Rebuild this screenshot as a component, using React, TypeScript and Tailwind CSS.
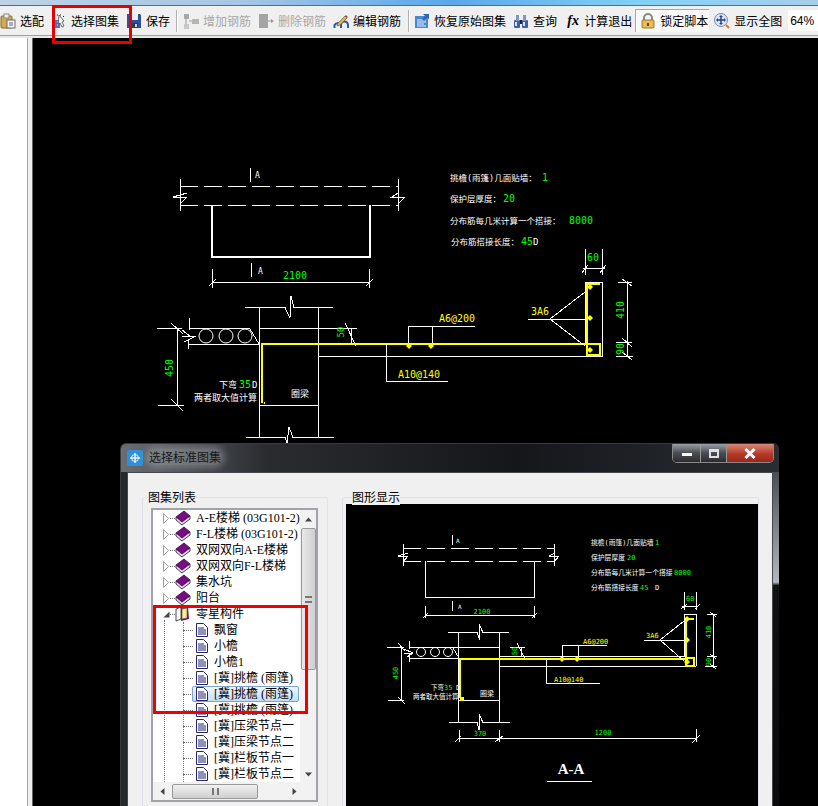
import React from "react";

const CJK = "font-['Liberation_Serif','Noto_Sans_CJK_SC',serif]";
const G = "#00ff00";
const Y = "#ffff00";

function Lines({ d, c = "#fff", w = 1 }: { d: string; c?: string; w?: number }) {
  return <path d={d} fill="none" stroke={c} strokeWidth={w} shapeRendering="crispEdges" />;
}
function Txt({ x, y, c = "#fff", s = 10, rot, a, children }: { x: number; y: number; c?: string; s?: number; rot?: boolean; a?: "middle"; children: React.ReactNode }) {
  return (
    <text x={x} y={y} fill={c} fontSize={s} textAnchor={a} transform={rot ? `rotate(-90 ${x} ${y})` : undefined} fontFamily="'DejaVu Sans Mono','Noto Sans CJK SC',monospace">
      {children}
    </text>
  );
}
function Dot({ x, y }: { x: number; y: number }) {
  return <path d={`M${x - 3} ${y}L${x} ${y - 3}L${x + 3} ${y}L${x} ${y + 3}Z`} fill={Y} />;
}

function MainDrawing() {
  return (
    <svg width={785} height={768} viewBox="33 38 785 768" className="block">
      <path d="M180 186.5H398M180 205.5H398" stroke="#fff" strokeDasharray="18 6" shapeRendering="crispEdges" />
      <Lines d="M180.5 179V211M398.5 179V211M250.5 168V182M251.5 263V277" />
      <Lines d="M187 193L173 197H187L180 204M398 193L392 197H405L398 204" />
      <Lines w={2} d="M212 205V257H370V205" />
      <Txt x={255} y={178} s={8}>A</Txt>
      <Txt x={258} y={274} s={8}>A</Txt>
      <Lines d="M212 282.5H370M212.5 269V288M369.5 269V288M209 286L216 279M366 286L373 279" />
      <Txt x={295} y={279} c={G} a="middle" s={10}>2100</Txt>

      <Lines d="M245 307.5H285L290 318L291 296L294 307.5H333M246 437.5H285L287 443L289 427L293 437.5H334" />
      <Lines d="M259.5 307V437M318.5 307V437M259 328.5H318M157 328.5H182M189 328.5H250M189 344.5H259M189 318V330M188 340V349M182 330L190 336M182 336H196L184 342" />
      <circle cx={206} cy={336} r={7} stroke="#fff" fill="none" />
      <circle cx={226} cy={336} r={7} stroke="#fff" fill="none" />
      <circle cx={245} cy={336} r={7} stroke="#fff" fill="none" />
      <Lines d="M250 329L259 344" />
      <Lines d="M177.5 328V405M158 405.5H184M171 323L183 334M171 399L183 411" />
      <Txt x={173} y={368} c={G} rot a="middle">450</Txt>
      <Lines d="M259 405.5H318M318 356.5H603M318 328.5H357M351.5 328V343M345 323L356 346" />
      <Txt x={344} y={332} c={G} rot a="middle" s={9}>50</Txt>
      <Lines c={Y} w={2} d="M586 343.5H262V403" />
      <Lines c={Y} w={2} d="M264 403H265M586 343.5H600" />
      <Dot x={409} y={346} />
      <Dot x={431} y={346} />
      <Lines d="M408.5 343V326.5H475M432.5 326V343M386.5 344V381.5H448" />
      <Txt x={439} y={322} c={Y} s={10}>A6@200</Txt>
      <Txt x={398} y={378} c={Y} s={10}>A10@140</Txt>
      <Txt x={219} y={388} s={9}>下弯</Txt>
      <Txt x={239} y={388} c={G} s={10}>35</Txt>
      <Txt x={252} y={388} s={9}>D</Txt>
      <Txt x={194} y={401} s={9}>两者取大值计算</Txt>
      <Txt x={291} y={397} s={9}>圈梁</Txt>

      <Txt x={450} y={181} s={8.5}>挑檐(雨篷)几面贴墙：</Txt>
      <Txt x={542} y={181} c={G} s={10}>1</Txt>
      <Txt x={450} y={202} s={8.5}>保护层厚度：</Txt>
      <Txt x={503} y={202} c={G} s={10}>20</Txt>
      <Txt x={450} y={224} s={8.5}>分布筋每几米计算一个搭接：</Txt>
      <Txt x={569} y={224} c={G} s={10}>8000</Txt>
      <Txt x={451} y={245} s={8.5}>分布筋搭接长度：</Txt>
      <Txt x={521} y={245} c={G} s={10}>45</Txt>
      <Txt x={533} y={245} s={9}>D</Txt>

      <Lines d="M585.5 249V275M602.5 249V275M583 268.5H605M582 273L588 265M600 273L606 265" />
      <Txt x={587} y={261} c={G} s={10}>60</Txt>
      <Lines d="M585.5 282.5H602.5V356M585.5 282V343" />
      <Lines c={Y} w={2} d="M587 356V284H600M587 344H600V355H587" />
      <Dot x={590} y={287} />
      <Dot x={590} y={318} />
      <Dot x={590} y={350} />
      <Lines d="M528 319.5H586M550 319L585 292M550 319L585 346" />
      <Txt x={531} y={315} c={Y} s={10}>3A6</Txt>
      <Lines d="M627.5 281V356M618 282.5H632M616 342.5H632M616 356.5H633M622 279L632 286M622 338L632 347M622 352L632 360" />
      <Txt x={624} y={310} c={G} rot a="middle" s={10}>410</Txt>
      <Txt x={624} y={349} c={G} rot a="middle" s={10}>90</Txt>
    </svg>
  );
}

function SmallDrawing() {
  return (
    <svg width={412} height={303} viewBox="346 503 412 303" className="block">
      <path d="M403 547.5H555M403 560.5H555" stroke="#fff" strokeDasharray="18 6" shapeRendering="crispEdges" />
      <Lines d="M403.5 543V565M554.5 543V565M452.5 534V544M452.5 600V610" />
      <Lines d="M408 552L398 555H408L403 561M555 552L549 555H559L554 561" />
      <Lines d="M425.5 560V596.5H534.5V560" />
      <Txt x={456} y={542} s={6}>A</Txt>
      <Txt x={458} y={608} s={6}>A</Txt>
      <Lines d="M425 614.5H534M425.5 605V617M534.5 605V617M423 617L428 612M532 617L537 612" />
      <Txt x={482} y={613} c={G} a="middle" s={7}>2100</Txt>

      <Lines d="M448 631.5H477L480 639L479 623L483 631.5H509M449 721.5H477L479 729L479 713L483 721.5H510" />
      <Lines d="M458.5 631V721M499.5 631V721M459 646.5H499M387 646.5H404M409 646.5H459M409 657.5H459M409 640V648M409 652V661M404 648L413 652M404 652H413L407 656" />
      <circle cx={421} cy={651} r={4.5} stroke="#fff" fill="none" />
      <circle cx={435} cy={651} r={4.5} stroke="#fff" fill="none" />
      <circle cx={448} cy={651} r={4.5} stroke="#fff" fill="none" />
      <Lines d="M453 647L459 657" />
      <Lines d="M401.5 646V699M388 699.5H404M398 642L405 650M398 696L405 703M458 699.5H499" />
      <Txt x={398} y={672} c={G} rot a="middle" s={7}>450</Txt>
      <Lines d="M499 655.5H686M499 665.5H696M510 646.5H525M521.5 646V656M517 642L525 658" />
      <Txt x={517} y={650} c={G} rot a="middle" s={7}>50</Txt>
      <Lines c={Y} w={2} d="M688 657.5H460V697" />
      <Lines c={Y} w={2} d="M461 697H463V699H461Z" />
      <Dot x={562} y={658} />
      <Dot x={577} y={658} />
      <Lines d="M562.5 657V644.5H607M578.5 644V657M546.5 657V682.5H600" />
      <Txt x={583} y={643} c={Y} s={7}>A6@200</Txt>
      <Txt x={554} y={681} c={Y} s={7}>A10@140</Txt>
      <Txt x={431} y={689} s={6.500}>下弯</Txt>
      <Txt x={444} y={689} c={G} s={7}>35</Txt>
      <Txt x={456} y={689} s={7}>D</Txt>
      <Txt x={413} y={698} s={6.500}>两者取大值计算</Txt>
      <Txt x={480} y={695} s={7}>圈梁</Txt>
      <Lines d="M459 737.5H697M459.5 729V741M499.5 729V741M455 741L461 735M495 741L503 735M696.5 728V741M692 742L700 734" />
      <Txt x={480} y={735} c={G} a="middle" s={7}>370</Txt>
      <Txt x={603} y={734} c={G} a="middle" s={7}>1200</Txt>
      <text x={571} y={773} fill="#fff" fontSize={15} fontWeight={700} textAnchor="middle" fontFamily="'Liberation Serif',serif">A-A</text>
      <Lines d="M547 780.5H592" />

      <Txt x={591} y={544} s={6.800}>挑檐(雨篷)几面贴墙</Txt>
      <Txt x={655} y={544} c={G} s={7}>1</Txt>
      <Txt x={591} y={559} s={6.800}>保护层厚度</Txt>
      <Txt x={627} y={559} c={G} s={7}>20</Txt>
      <Txt x={591} y={574} s={6.800}>分布筋每几米计算一个搭接</Txt>
      <Txt x={674} y={574} c={G} s={7}>8000</Txt>
      <Txt x={591} y={589} s={6.800}>分布筋搭接长度</Txt>
      <Txt x={640} y={589} c={G} s={7}>45</Txt>
      <Txt x={655} y={589} s={7}>D</Txt>

      <Lines d="M684.5 591V609M696.5 591V609M682 605.5H698M681 608L687 603M695 608L700 603" />
      <Txt x={686} y={600} c={G} s={7}>60</Txt>
      <Lines d="M684.5 613.5H696.5V665M684.5 613V656" />
      <Lines c={Y} w={2} d="M686 665V618H694M686 656.5H693.5V665H686" />
      <Dot x={687} y={618} />
      <Dot x={687} y={639} />
      <Dot x={687} y={661} />
      <Lines d="M644 639.5H685M660 639L684 620M660 639L684 660" />
      <Txt x={646} y={637} c={Y} s={7}>3A6</Txt>
      <Lines d="M713.5 613V666M707 613.5H717M707 655.5H717M705 665.5H717M710 611L716 616M710 653L716 658M710 663L716 668" />
      <Txt x={711} y={631} c={G} rot a="middle" s={7}>410</Txt>
      <Txt x={711} y={661} c={G} rot a="middle" s={7}>90</Txt>
    </svg>
  );
}

const I = ({ children, w = 16 }: { children: React.ReactNode; w?: number }) => (
  <svg width={w} height={16} viewBox="0 0 16 16" className="shrink-0">{children}</svg>
);

const icons = {
  peel: (
    <I><rect x="1" y="3" width="11" height="12" rx="1" fill="#d8a850" stroke="#8a6a20" /><rect x="4" y="1" width="5" height="4" fill="#eee" stroke="#888" /><rect x="7" y="7" width="8" height="8" fill="#f4f4f4" stroke="#6a6a80" /><path d="M9 10h4M9 12h4" stroke="#667" /></I>
  ),
  select: (
    <I><path d="M3 2h1M6 2h1M9 2h1M12 3l1 1M2 4v2" stroke="#222" /><path d="M1 7h8v8H1z" fill="#4a78b8" /><path d="M3 9h1M6 9h1M3 12h1M6 12h1" stroke="#cfe0f4" /><path d="M8 2l5 6-2 1 2 4-2 1-2-4-2 1z" fill="#f4f4f4" stroke="#333" strokeWidth=".7" /></I>
  ),
  save: (
    <I><path d="M1 1h13l1 1v13H1z" fill="#2d4f9c" /><rect x="4" y="1" width="8" height="6" fill="#e8eef8" /><rect x="4" y="10" width="8" height="5" fill="#303848" /><rect x="9" y="11" width="2" height="3" fill="#c8d0e0" /></I>
  ),
  add: (
    <I><rect x="1" y="1" width="5" height="5" fill="#a8a8a8" /><rect x="1" y="11" width="5" height="5" fill="#c8c8c8" /><rect x="9" y="6" width="7" height="5" fill="#b4b4b4" /><path d="M6 8h3M3 6v5" stroke="#999" /></I>
  ),
  del: (
    <I><path d="M1 1h9v14H1z" fill="#a4a4a4" /><path d="M10 8h4" stroke="#999" /><path d="M13 6l3 2-3 2z" fill="#999" /></I>
  ),
  edit: (
    <I><path d="M1.500 15v-3a4 4 0 0 1 7 0M8 15v-3a3.500 3.500 0 0 1 7 0v3" fill="none" stroke="#2a5aa8" strokeWidth="2" /><path d="M5 10l7-7 2 2-7 7-3 1z" fill="#e8b040" stroke="#664" strokeWidth=".7" /><path d="M12 3l1-1 2 2-1 1z" fill="#c04030" /></I>
  ),
  restore: (
    <I><rect x="1" y="3" width="13" height="12" fill="#4888d0" /><path d="M3 7h9M3 9h9M3 11h7M3 13h9" stroke="#e8f0fa" /><path d="M9 1l6 0v5l-2-1-3 3-2-2 3-3z" fill="#2d68b8" /></I>
  ),
  query: (
    <I><rect x="1" y="7" width="6" height="8" rx="1" fill="#3e5da8" /><rect x="9" y="7" width="6" height="8" rx="1" fill="#3e5da8" /><rect x="3" y="2" width="3" height="6" fill="#7f96cc" /><rect x="10" y="2" width="3" height="6" fill="#7f96cc" /><rect x="7" y="7" width="2" height="4" fill="#222" /><rect x="2" y="9" width="2" height="4" fill="#dbe4f5" /><rect x="10" y="9" width="2" height="4" fill="#dbe4f5" /></I>
  ),
  lock: (
    <I><path d="M4 8V5a4 4 0 0 1 8 0v3" fill="none" stroke="#8a8a78" strokeWidth="2" /><rect x="2" y="7" width="12" height="8" rx="1" fill="#e8bc58" stroke="#a07828" /><rect x="7" y="10" width="2" height="3" fill="#6a4a10" /></I>
  ),
  zoom: (
    <I><circle cx="7" cy="7" r="6.500" fill="#dce6f4" stroke="#7888a8" /><path d="M7 3v8M3 7h8" stroke="#27408c" strokeWidth="1.500" /><path d="M7 2l2 2H5zM7 12l2-2H5zM2 7l2-2v4zM12 7l-2-2v4z" fill="#27408c" /><path d="M12 12l3 3" stroke="#d07830" strokeWidth="2" /></I>
  ),
};

function Tool({ icon, label, off, ml }: { icon: React.ReactNode; label: string; off?: boolean; ml: string }) {
  return (
    <div className={`flex items-center gap-1 ${ml}`}>
      {icon}
      <span className={off ? "text-[#a8a8a8]" : "text-black"}>{label}</span>
    </div>
  );
}

const Sep = ({ ml }: { ml: string }) => <div className={`h-[22px] w-[2px] border-l border-[#b0b0b0] bg-white ${ml}`} />;

function Toolbar() {
  return (
    <div className="flex h-[38px] shrink-0 flex-col">
      <div className="h-[5px] shrink-0 bg-[linear-gradient(90deg,#bdd2e6,#a4c6e4_30%,#5aa8ea_55%,#82d0f4_78%,#a6cfec)]" />
      <div className="h-px shrink-0 bg-[#5f6a80]" />
      <div className="flex h-[29px] shrink-0 items-center bg-[#f0f0f0] text-[12px] font-['Noto_Sans_CJK_SC',sans-serif]">
        <Tool ml="ml-0" icon={icons.peel} label="选配" />
        <Tool ml="ml-[7px]" icon={icons.select} label="选择图集" />
        <Tool ml="ml-[7px]" icon={icons.save} label="保存" />
        <Sep ml="ml-[6px]" />
        <Tool ml="ml-[5px]" icon={icons.add} label="增加钢筋" off />
        <Tool ml="ml-[7px]" icon={icons.del} label="删除钢筋" off />
        <Tool ml="ml-[7px]" icon={icons.edit} label="编辑钢筋" />
        <Sep ml="ml-[7px]" />
        <Tool ml="ml-[4px]" icon={icons.restore} label="恢复原始图集" />
        <Tool ml="ml-[7px]" icon={icons.query} label="查询" />
        <Tool
          ml="ml-[9px]"
          icon={<span className="w-[14px] text-center font-['Liberation_Serif',serif] text-[14px] leading-none font-bold italic">fx</span>}
          label="计算退出"
        />
        <div className="ml-[3px] flex h-[23px] w-[74px] items-center gap-[4px] border-t border-l border-[#a8a8a8] bg-[#f9f9f9] pl-[4px]">
          {icons.lock}
          <span className="text-black">锁定脚本</span>
        </div>
        <Tool ml="ml-[5px]" icon={icons.zoom} label="显示全图" />
        <div className="ml-[6px] flex h-[21px] flex-1 items-center bg-white pl-[2px] font-['Liberation_Sans',sans-serif] text-black">64%</div>
      </div>
      <div className="h-[3px] shrink-0 border-t border-[#a0a0a0] bg-[#e8e8e8]" />
    </div>
  );
}

const Book = () => (
  <svg width={16} height={16} viewBox="0 0 16 16" className="shrink-0">
    <path d="M1 7l8-6 6 5-8 6z" fill="#7a0a88" stroke="#2a1030" strokeWidth=".8" />
    <path d="M1 7l6 5 8-6v3l-8 6-6-5z" fill="#e8d8ec" stroke="#2a1030" strokeWidth=".8" />
  </svg>
);
const OpenBook = () => (
  <svg width={16} height={16} viewBox="0 0 16 16" className="shrink-0">
    <path d="M1 3l5-2v12l-5 2z" fill="#fff" stroke="#222" strokeWidth=".8" />
    <path d="M6 2l7-1 1 12-8 2z" fill="#7a0a88" />
    <path d="M7 3l5-1v10l-5 1z" fill="#f8f080" stroke="#555" strokeWidth=".6" />
  </svg>
);
const Doc = () => (
  <svg width={12} height={14} viewBox="0 0 12 14" className="shrink-0">
    <path d="M.5.5h7l4 4v9H.5z" fill="#fff" stroke="#26266e" />
    <path d="M2 5h6M2 7h8M2 9h8M2 11h8" stroke="#20207a" />
  </svg>
);
const Arrow = ({ d, w = 7 }: { d: string; w?: number }) => (
  <svg width={w} height={w} viewBox="0 0 7 7" className="shrink-0"><path d={d} fill="#444" /></svg>
);

const books = ["A-E楼梯 (03G101-2)", "F-L楼梯 (03G101-2)", "双网双向A-E楼梯", "双网双向F-L楼梯", "集水坑", "阳台"];
const docs = ["飘窗", "小檐", "小檐1", "[冀]挑檐 (雨篷)", "[冀]挑檐 (雨篷)", "[冀]挑檐 (雨篷)", "[冀]压梁节点一", "[冀]压梁节点二", "[冀]栏板节点一", "[冀]栏板节点二"];

function Tree() {
  return (
    <div className="mt-[10px] ml-[8px] flex h-[294px] w-[167px] flex-col border-2 border-[#a0a4a8] bg-white">
      <div className="flex h-[272px] min-h-0">
        <div className={`relative w-[147px] overflow-hidden text-[12px] leading-4 text-black ${CJK}`}>
          <div className="absolute top-[110px] left-[11px] h-[170px] border-l border-dotted border-[#777]" />
          <div className="absolute top-[112px] left-[30px] h-[170px] border-l border-dotted border-[#777]" />
          {books.map((t) => (
            <div key={t} className="flex h-4 items-center">
              <svg width={7} height={11} viewBox="0 0 7 11" className="ml-[10px] shrink-0"><path d="M.5.500l5 5-5 5z" fill="#fff" stroke="#a0a0a0" /></svg>
              <span className="w-[5px] border-t border-dotted border-[#777]" />
              <Book />
              <span className="ml-[5px] whitespace-nowrap">{t}</span>
            </div>
          ))}
          <div className="flex h-4 items-center">
            <svg width={7} height={7} viewBox="0 0 7 7" className="ml-[10px] shrink-0"><path d="M6.500.5v6h-6z" fill="#444" /></svg>
            <span className="w-[5px] border-t border-dotted border-[#777]" />
            <OpenBook />
            <span className="ml-[5px]">零星构件</span>
          </div>
          {docs.map((t, i) => (
            <div key={i} className="flex h-4 items-center pr-px">
              <span className="ml-[30px] w-[10px] shrink-0 border-t border-dotted border-[#777]" />
              <div className={`-ml-px flex h-4 min-w-0 flex-1 items-center overflow-hidden whitespace-nowrap ${i === 4 ? "rounded-[2px] border border-[#7da2ce] bg-[linear-gradient(180deg,#f0f6fd,#c4dcf6)]" : "border border-transparent"}`}>
                <span className="ml-[3px] flex"><Doc /></span>
                <span className="ml-[6px]">{t}</span>
              </div>
            </div>
          ))}
        </div>
        <div className="flex w-[16px] flex-col items-center bg-[#f2f2f2]">
          <div className="flex h-[18px] items-center justify-center"><Arrow d="M3.500 1.500l3.500 4h-7z" /></div>
          <div className="flex h-[142px] w-[15px] items-center justify-center rounded-[2px] border border-[#9a9a9a] bg-[linear-gradient(90deg,#e8e8e8,#cfcfcf)]">
            <div className="h-[7px] w-[7px] border-y-2 border-[#777]" />
          </div>
          <div className="flex-1" />
          <div className="flex h-4 items-center justify-center"><Arrow d="M3.500 5.500l3.500-4h-7z" /></div>
        </div>
      </div>
      <div className="flex h-[18px] items-center bg-[#f2f2f2]">
        <div className="flex w-[19px] justify-center"><Arrow d="M1.500 3.500l4-3.500v7z" /></div>
        <div className="flex h-[15px] w-[86px] items-center justify-center rounded-[2px] border border-[#9a9a9a] bg-[linear-gradient(180deg,#f0f0f0,#cfcfcf)]">
          <div className="h-[7px] w-[7px] border-x-2 border-[#777]" />
        </div>
        <div className="flex-1" />
        <div className="flex w-[44px] justify-center"><Arrow d="M5.500 3.500l-4-3.500v7z" /></div>
      </div>
    </div>
  );
}

function Dialog() {
  return (
    <div className="absolute top-[443px] left-[120px] flex h-[363px] w-[659px] flex-col overflow-hidden rounded-t-[6px] border-t border-l border-[#3a3a3a] bg-[#191b1e]">
      <div className="flex h-[28px] shrink-0 items-start bg-[linear-gradient(90deg,#6a6e72,#2a2c30_22%,#14161a_60%,#2a2d32)]">
        <svg width={16} height={16} viewBox="0 0 16 16" className="mt-[6px] ml-[6px] shrink-0">
          <rect width="16" height="16" rx="2" fill="#2f8fd8" />
          <path d="M3 8h10M8 3v10" stroke="#e8f4ff" strokeWidth="1.500" />
          <circle cx="8" cy="8" r="3.500" fill="none" stroke="#e8f4ff" />
        </svg>
        <span className="mt-[5px] ml-[5px] rounded-[8px] bg-[#b8bcc0]/35 px-[1px] text-[12px] leading-4 text-[#16181c] shadow-[0_0_6px_3px_rgba(184,188,192,0.35)] font-['Noto_Sans_CJK_SC',sans-serif]">选择标准图集</span>
        <div className="flex-1" />
        <div className="mr-[5px] flex h-[19px] overflow-hidden rounded-b-[5px] border border-t-0 border-[#888]">
          <div className="flex w-[28px] items-center justify-center border-r border-[#999] bg-[linear-gradient(180deg,#9aa0a6,#4a4e54_50%,#2a2c30)]">
            <div className="mt-[3px] h-[3px] w-[10px] bg-white" />
          </div>
          <div className="flex w-[26px] items-center justify-center border-r border-[#999] bg-[linear-gradient(180deg,#9aa0a6,#4a4e54_50%,#2a2c30)]">
            <div className="h-[9px] w-[10px] border-2 border-t-[3px] border-[#e0e0e0]" />
          </div>
          <div className="flex w-[46px] items-center justify-center bg-[linear-gradient(180deg,#d88a78,#b83a28_55%,#98281c)]">
            <svg width={12} height={11} viewBox="0 0 12 11"><path d="M1.500 1l9 9M10.500 1l-9 9" stroke="#fff" strokeWidth="3" /></svg>
          </div>
        </div>
      </div>
      <div className="flex min-h-0 flex-1">
        <div className="w-[6px] shrink-0 bg-[#26282b]" />
        <div className="flex min-h-0 flex-1 gap-[14px] border border-b-0 border-[#44484c] bg-[#f0f0f0] pt-[24px] pl-[14px]">
          <div className="relative h-[320px] w-[186px] shrink-0 rounded-[2px] border border-[#dfe3e8]">
            <Tree />
            <span className="absolute -top-[9px] left-[5px] bg-[#f0f0f0] text-[12px] leading-4 text-black font-['Noto_Sans_CJK_SC',sans-serif]">图集列表</span>
          </div>
          <div className="relative h-[320px] w-[417px] shrink-0 rounded-[2px] border border-[#dfe3e8]">
            <span className="absolute -top-[9px] left-[9px] bg-[#f0f0f0] text-[12px] leading-4 text-black font-['Noto_Sans_CJK_SC',sans-serif]">图形显示</span>
            <div className="mt-[6px] ml-[3px] h-[303px] w-[412px] bg-black"><SmallDrawing /></div>
          </div>
        </div>
        <div className="w-[6px] shrink-0 bg-[linear-gradient(180deg,#4a4e52,#b4b8bc_33%,#101010_34%,#0a0a0a)]" />
      </div>
    </div>
  );
}

export default function App() {
  return (
    <div className="relative flex h-[806px] w-[818px] flex-col overflow-hidden bg-white">
      <Toolbar />
      <div className="flex min-h-0 flex-1">
        <div className="w-[28px] shrink-0 border-r border-[#a8a8a8] bg-white" />
        <div className="w-[5px] shrink-0 border-r border-[#666] bg-[#f0f0f0]" />
        <div className="min-w-0 flex-1 bg-black"><MainDrawing /></div>
      </div>
      <Dialog />
      <div className="absolute top-[5px] left-[52px] h-[39px] w-[80px] border-[3px] border-[#e60000]" />
      <div className="absolute top-[605px] left-[153px] h-[109px] w-[155px] border-[3px] border-[#f00000]" />
    </div>
  );
}
